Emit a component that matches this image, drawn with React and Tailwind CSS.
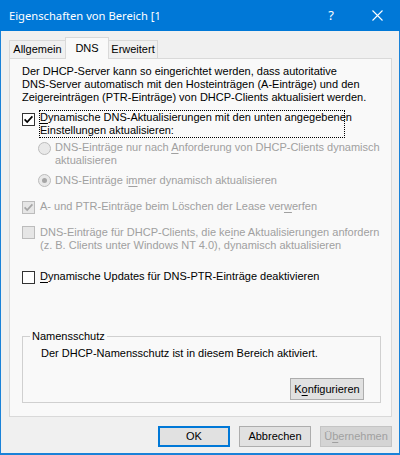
import React from "react";

function Check({ color }) {
  return (
    <svg width="11" height="11" viewBox="0 0 11 11">
      <path d="M1.6 5.4 L4.2 8 L9.4 2.4" fill="none" stroke={color} strokeWidth="1.7" />
    </svg>
  );
}

function Box({ checked, disabled, top }) {
  return (
    <div
      className={
        (disabled
          ? "border-[#bcbcbc] bg-[#e6e6e6] "
          : "border-[#333333] bg-white ") +
        "w-[13px] h-[13px] shrink-0 border flex items-center justify-center " +
        top
      }
    >
      {checked && <Check color={disabled ? "#a6a6a6" : "#000"} />}
    </div>
  );
}

function Radio({ selected }) {
  return (
    <div className="w-[13px] h-[13px] shrink-0 rounded-full border border-[#bcbcbc] bg-[#e9e9e9] flex items-center justify-center">
      {selected && <div className="w-[5px] h-[5px] rounded-full bg-[#a6a6a6]" />}
    </div>
  );
}

function Btn({ children, className }) {
  return (
    <div
      className={
        "h-[21px] flex items-center justify-center border text-[11px] leading-[13px] " +
        className
      }
    >
      {children}
    </div>
  );
}

export default function App() {
  return (
    <div className="w-[400px] h-[455px] flex flex-col font-['Liberation_Sans',Arial,sans-serif] text-[11px] leading-[13px] text-black">
      {/* Title bar */}
      <div className="h-[31px] shrink-0 bg-[#0078d7] flex items-center text-white">
        <span className="ml-[9px] font-['Noto_Sans',sans-serif] text-[11.2px] leading-[16px]">
          Eigenschaften von Bereich [1
        </span>
        <div className="ml-auto w-[46px] h-full flex items-center justify-center font-['Noto_Sans',sans-serif] text-[13px]">
          ?
        </div>
        <div className="w-[46px] h-full flex items-center justify-center">
          <svg width="11" height="11" viewBox="0 0 11 11">
            <path d="M0.5 0.5 L10.5 10.5 M10.5 0.5 L0.5 10.5" stroke="white" strokeWidth="1.1" fill="none" />
          </svg>
        </div>
      </div>

      {/* Body */}
      <div className="flex-1 flex flex-col bg-[#f0f0f0] border-x border-b-2 border-[#1a82d8] pl-[8px] pr-[7px] pt-[6px]">
        {/* Tabs */}
        <div className="h-[22px] flex items-end -mb-px relative z-10">
          <div className="w-[56px] h-[18px] mb-px border-l border-t border-[#d9d9d9] bg-[#f0f0f0] flex items-center justify-center">
            Allgemein
          </div>
          <div className="w-[44px] h-[22px] border-l border-t border-r border-[#d9d9d9] bg-[#f9f9f9] flex items-center justify-center">
            DNS
          </div>
          <div className="w-[49px] h-[18px] mb-px border-t border-r border-[#d9d9d9] bg-[#f0f0f0] flex items-center justify-center">
            Erweitert
          </div>
        </div>

        {/* Panel */}
        <div className="h-[359px] shrink-0 border border-[#d9d9d9] bg-[#f9f9f9] pl-[12px] pt-[6px] flex flex-col">
          <p className="whitespace-nowrap">
            Der DHCP-Server kann so eingerichtet werden, dass autoritative
            <br />
            DNS-Server automatisch mit den Hosteinträgen (A-Einträge) und den
            <br />
            Zeigereinträgen (PTR-Einträge) von DHCP-Clients aktualisiert werden.
          </p>

          {/* CB1 */}
          <div className="mt-[6px] flex items-start">
            <Box checked top="mt-[3px]" />
            <div className="ml-[4px] w-[306px] border border-dotted border-black whitespace-nowrap">
              <span className="underline underline-offset-[2px]">D</span>ynamische DNS-Aktualisierungen mit den unten angegebenen
              <br />
              Einstellungen aktualisieren:
            </div>
          </div>

          {/* Radios */}
          <div className="mt-[3px] ml-[16px] flex items-start text-[#a0a0a0]">
            <div className="mt-[1px]">
              <Radio />
            </div>
            <div className="ml-[4px] whitespace-nowrap">
              DNS-Einträge nur nach <span className="underline underline-offset-[2px]">A</span>nforderung von DHCP-Clients dynamisch
              <br />
              aktualisieren
            </div>
          </div>
          <div className="mt-[7px] ml-[16px] flex items-start text-[#a0a0a0]">
            <div className="mt-[0px]">
              <Radio selected />
            </div>
            <div className="ml-[4px] whitespace-nowrap">
              DNS-Einträge i<span className="underline underline-offset-[2px]">m</span>mer dynamisch aktualisieren
            </div>
          </div>

          {/* Disabled checkboxes */}
          <div className="mt-[13px] flex items-start text-[#a0a0a0]">
            <Box checked disabled top="mt-[1px]" />
            <div className="ml-[5px] whitespace-nowrap">
              A- und PTR-Einträge beim Löschen der Lease ver<span className="underline underline-offset-[2px]">w</span>erfen
            </div>
          </div>
          <div className="mt-[12px] flex items-start text-[#a0a0a0]">
            <Box disabled top="mt-[0px]" />
            <div className="ml-[5px] whitespace-nowrap">
              DNS-Einträge für DHCP-Clients, die ke<span className="underline underline-offset-[2px]">i</span>ne Aktualisierungen anfordern
              <br />
              (z. B. Clients unter Windows NT 4.0), dynamisch aktualisieren
            </div>
          </div>
          <div className="mt-[18px] flex items-start">
            <Box top="mt-[1px]" />
            <div className="ml-[5px] whitespace-nowrap">
              <span className="underline underline-offset-[2px]">D</span>ynamische Updates für DNS-PTR-Einträge deaktivieren
            </div>
          </div>

          {/* Group box */}
          <fieldset className="mt-[46px] w-[359px] border border-[#d0d0d0] px-0 pb-[2px] flex flex-col">
            <legend className="ml-[7px] px-[2px]">Namensschutz</legend>
            <div className="mt-[4px] pl-[18px] whitespace-nowrap">
              Der DHCP-Namensschutz ist in diesem Bereich aktiviert.
            </div>
            <div className="mt-[18px] flex justify-end pr-[16px]">
              <Btn className="w-[74px] h-[22px] bg-[#e1e1e1] border-[#adadad]">
                K<span className="underline underline-offset-[2px]">o</span>nfigurieren
              </Btn>
            </div>
          </fieldset>
        </div>

        {/* Bottom buttons */}
        <div className="mt-[9px] flex justify-end gap-[9px]">
          <Btn className="w-[72px] bg-[#e1e1e1] border-2 border-[#0078d7]">OK</Btn>
          <Btn className="w-[72px] bg-[#e1e1e1] border-[#adadad]">Abbrechen</Btn>
          <Btn className="w-[72px] bg-[#d4d4d4] border-[#c4c4c4] text-[#a0a0a0]">
            Ü<span className="underline underline-offset-[2px]">b</span>ernehmen
          </Btn>
        </div>
      </div>
    </div>
  );
}
